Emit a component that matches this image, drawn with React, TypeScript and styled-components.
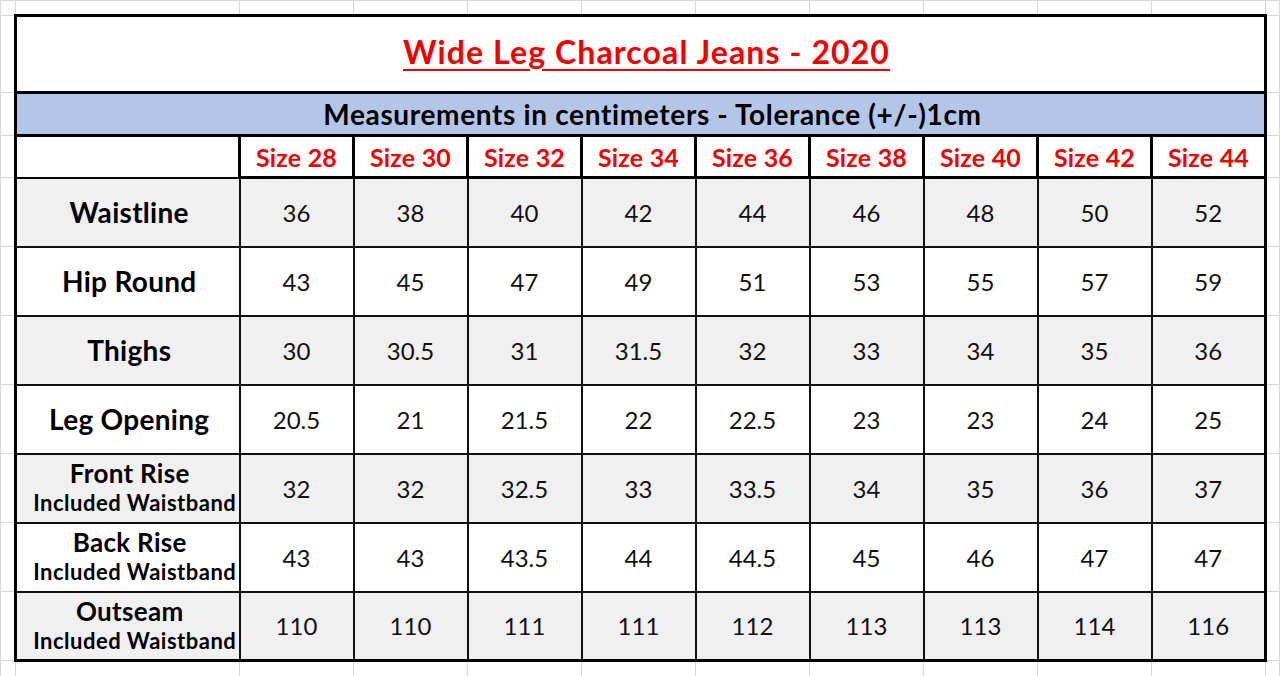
import React from "react";
import styled, { createGlobalStyle, css } from "styled-components";

const GlobalStyle = createGlobalStyle`
  html, body {
    margin: 0;
    padding: 0;
    background: #ffffff;
    overflow: hidden;
  }
  body {
    font-family: Lato, "Open Sans", "Liberation Sans", sans-serif;
  }
`;

const SIZES = ["28", "30", "32", "34", "36", "38", "40", "42", "44"];

interface Measure {
  label: string;
  note?: string;
  values: string[];
}

const ROWS: Measure[] = [
  { label: "Waistline", values: ["36", "38", "40", "42", "44", "46", "48", "50", "52"] },
  { label: "Hip Round", values: ["43", "45", "47", "49", "51", "53", "55", "57", "59"] },
  { label: "Thighs", values: ["30", "30.5", "31", "31.5", "32", "33", "34", "35", "36"] },
  { label: "Leg Opening", values: ["20.5", "21", "21.5", "22", "22.5", "23", "23", "24", "25"] },
  {
    label: "Front Rise",
    note: "Included Waistband",
    values: ["32", "32", "32.5", "33", "33.5", "34", "35", "36", "37"],
  },
  {
    label: "Back Rise",
    note: "Included Waistband",
    values: ["43", "43", "43.5", "44", "44.5", "45", "46", "47", "47"],
  },
  {
    label: "Outseam",
    note: "Included Waistband",
    values: ["110", "110", "111", "111", "112", "113", "113", "114", "116"],
  },
];

export default function App() {
  return (
    <>
      <GlobalStyle />
      <Sheet>
        <colgroup>
          <col style={{ width: 15 }} />
          <col style={{ width: 224 }} />
          {SIZES.map((s) => (
            <col key={s} style={{ width: 114 }} />
          ))}
          <col />
        </colgroup>
        <tbody>
          {/* empty spreadsheet row above the chart */}
          <tr>
            {Array.from({ length: 12 }).map((_, i) => (
              <GridCell key={i} $h={13} />
            ))}
          </tr>

          <tr>
            <GridCell $h={76} />
            <TitleCell colSpan={10}>
              <Title>Wide Leg Charcoal Jeans - 2020</Title>
            </TitleCell>
            <GridCell />
          </tr>

          <tr>
            <GridCell $h={42} />
            <BandCell colSpan={10}>Measurements in centimeters - Tolerance (+/-)1cm</BandCell>
            <GridCell />
          </tr>

          <tr>
            <GridCell $h={41} />
            <CornerCell />
            {SIZES.map((s) => (
              <SizeCell key={s}>Size {s}</SizeCell>
            ))}
            <GridCell />
          </tr>

          {ROWS.map((row, i) => (
            <tr key={row.label}>
              <GridCell $h={68} />
              <LabelCell $shade={i % 2 === 0} $last={i === ROWS.length - 1}>
                {row.note ? (
                  <>
                    <MainLabel>{row.label}</MainLabel>
                    <SubLabel>{row.note}</SubLabel>
                  </>
                ) : (
                  <MainLabel $big>{row.label}</MainLabel>
                )}
              </LabelCell>
              {row.values.map((v, j) => (
                <ValueCell key={j} $shade={i % 2 === 0} $last={i === ROWS.length - 1}>
                  {v}
                </ValueCell>
              ))}
              <GridCell />
            </tr>
          ))}

          <tr>
            {Array.from({ length: 12 }).map((_, i) => (
              <GridCell key={i} $h={16} $open />
            ))}
          </tr>
        </tbody>
      </Sheet>
    </>
  );
}

const Sheet = styled.table`
  border-collapse: collapse;
  table-layout: fixed;
  width: 1280px;
  td {
    padding: 0;
  }
`;

const GridCell = styled.td<{ $h?: number; $open?: boolean }>`
  ${({ $h }) => ($h ? `height: ${$h}px;` : "")}
  border: 1px solid #d6d6d6;
  ${({ $open }) => ($open ? "border-bottom: none;" : "")}
  font-size: 0;
`;

const TitleCell = styled.td`
  border: 3px solid #000;
  text-align: center;
  vertical-align: middle;
  background: #fff;
`;

const Title = styled.span`
  display: inline-block;
  margin: 0 0 6px 12px;
  font-size: 32px;
  font-weight: 700;
  letter-spacing: 1.1px;
  color: #f00000;
  text-decoration: underline;
  text-decoration-thickness: 2px;
  text-underline-offset: 5px;
`;

const BandCell = styled.td`
  border: 3px solid #000;
  background: #b4c6e7;
  text-align: center;
  vertical-align: middle;
  padding-left: 24px !important;
  font-size: 28px;
  font-weight: 700;
  letter-spacing: 0.65px;
  color: #000;
`;

const CornerCell = styled.td`
  border-left: 3px solid #000;
  border-bottom: 2px solid #000;
  background: #fff;
`;

const SizeCell = styled.td`
  border: 3px solid #000;
  background: #fff;
  text-align: center;
  vertical-align: middle;
  font-size: 25px;
  font-weight: 700;
  letter-spacing: 0.2px;
  color: #f00000;
`;

const shaded = css<{ $shade?: boolean; $last?: boolean }>`
  background: ${({ $shade }) => ($shade ? "#f0f0f0" : "#ffffff")};
  border: 2px solid #111;
  ${({ $last }) => ($last ? "border-bottom: 3px solid #000;" : "")}
`;

const LabelCell = styled.td<{ $shade?: boolean; $last?: boolean }>`
  ${shaded}
  border-left: 3px solid #000;
  text-align: center;
  vertical-align: middle;
  white-space: nowrap;
  overflow: visible;
  color: #000;
`;

const MainLabel = styled.div<{ $big?: boolean }>`
  font-size: ${({ $big }) => ($big ? "28px" : "26px")};
  font-weight: 700;
  letter-spacing: 0.3px;
  line-height: ${({ $big }) => ($big ? "32px" : "30px")};
  padding-left: ${({ $big }) => ($big ? "3px" : "4px")};
`;

const SubLabel = styled.div`
  font-size: 22px;
  font-weight: 700;
  letter-spacing: 0.5px;
  line-height: 30px;
  padding-left: 14px;
`;

const ValueCell = styled.td<{ $shade?: boolean; $last?: boolean }>`
  ${shaded}
  text-align: center;
  vertical-align: middle;
  font-size: 24px;
  color: #111;
  &:nth-last-child(2) {
    border-right: 3px solid #000;
  }
`;
